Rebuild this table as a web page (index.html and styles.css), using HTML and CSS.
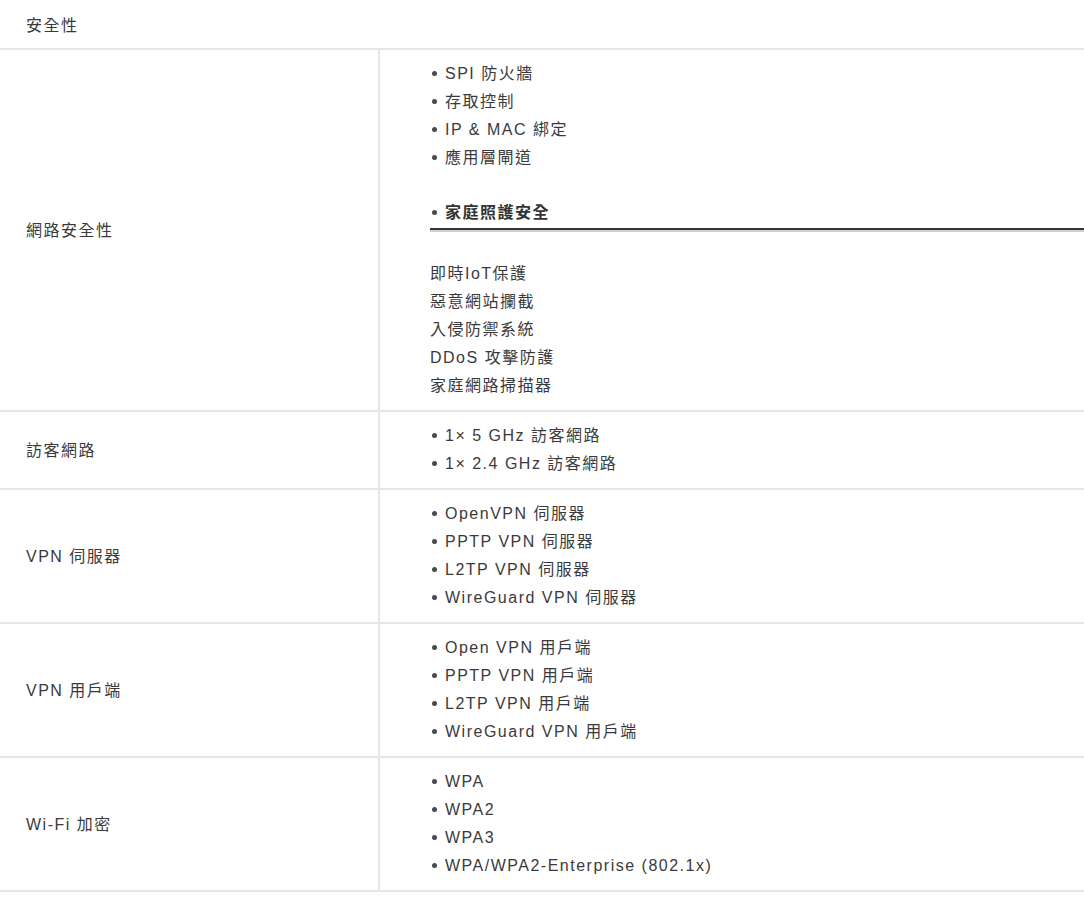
FILE: index.html
```html
<!DOCTYPE html>
<html lang="zh-Hant">
<head>
<meta charset="utf-8">
<link rel="stylesheet" href="styles.css">
</head>
<body>
<div class="spec">
  <div class="spec-head">安全性</div>

  <div class="spec-row">
    <div class="spec-label">網路安全性</div>
    <div class="spec-value">
      <ul class="bullets">
        <li>SPI 防火牆</li>
        <li>存取控制</li>
        <li>IP &amp; MAC 綁定</li>
        <li>應用層閘道</li>
      </ul>
      <div class="sub-title">家庭照護安全</div>
      <div class="sub-rule"></div>
      <ul class="plain">
        <li>即時IoT保護</li>
        <li>惡意網站攔截</li>
        <li>入侵防禦系統</li>
        <li>DDoS 攻擊防護</li>
        <li>家庭網路掃描器</li>
      </ul>
    </div>
  </div>

  <div class="spec-row">
    <div class="spec-label">訪客網路</div>
    <div class="spec-value">
      <ul class="bullets">
        <li>1× 5 GHz 訪客網路</li>
        <li>1× 2.4 GHz 訪客網路</li>
      </ul>
    </div>
  </div>

  <div class="spec-row">
    <div class="spec-label">VPN 伺服器</div>
    <div class="spec-value">
      <ul class="bullets">
        <li>OpenVPN 伺服器</li>
        <li>PPTP VPN 伺服器</li>
        <li>L2TP VPN 伺服器</li>
        <li>WireGuard VPN 伺服器</li>
      </ul>
    </div>
  </div>

  <div class="spec-row">
    <div class="spec-label">VPN 用戶端</div>
    <div class="spec-value">
      <ul class="bullets">
        <li>Open VPN 用戶端</li>
        <li>PPTP VPN 用戶端</li>
        <li>L2TP VPN 用戶端</li>
        <li>WireGuard VPN 用戶端</li>
      </ul>
    </div>
  </div>

  <div class="spec-row">
    <div class="spec-label">Wi-Fi 加密</div>
    <div class="spec-value">
      <ul class="bullets">
        <li>WPA</li>
        <li>WPA2</li>
        <li>WPA3</li>
        <li>WPA/WPA2-Enterprise (802.1x)</li>
      </ul>
    </div>
  </div>
</div>
</body>
</html>
```

FILE: styles.css
```css
html, body {
  margin: 0;
  padding: 0;
  background: #ffffff;
}

body {
  font-family: "Liberation Sans", "Noto Sans CJK TC", sans-serif;
  font-size: 16px;
  letter-spacing: 1.5px;
  color: #3a3a3c;
}

.spec {
  width: 1084px;
}

.spec-head {
  height: 48px;
  box-sizing: border-box;
  display: flex;
  align-items: center;
  padding-left: 26px;
  padding-bottom: 1px;
  border-bottom: 2px solid #e5e5ea;
  height: 50px;
}

.spec-row {
  display: grid;
  grid-template-columns: 380px 1fr;
  border-bottom: 2px solid #e5e5ea;
}

.spec-label {
  display: flex;
  align-items: center;
  padding-left: 26px;
  padding-bottom: 3px;
  border-right: 2px solid #e5e5ea;
}

.spec-value {
  padding: 10px 0 10px 50px;
}

.bullets,
.plain {
  list-style: none;
  margin: 0;
  padding: 0;
}

.bullets li,
.plain li {
  line-height: 28px;
  height: 28px;
  white-space: nowrap;
}

.bullets li::before,
.sub-title::before {
  content: "";
  display: inline-block;
  width: 5px;
  height: 5px;
  border-radius: 50%;
  background: #4a4a4c;
  margin: 0 8px 0 2px;
  vertical-align: middle;
  position: relative;
  top: -1px;
}

.sub-title {
  margin-top: 27px;
  line-height: 28px;
  height: 28px;
  font-weight: bold;
  color: #333333;
}

.sub-rule {
  margin-top: 1px;
  height: 0;
  border-top: 2px solid #333333;
  border-bottom: 2px solid #d0d0d0;
  margin-bottom: 28px;
}
```
